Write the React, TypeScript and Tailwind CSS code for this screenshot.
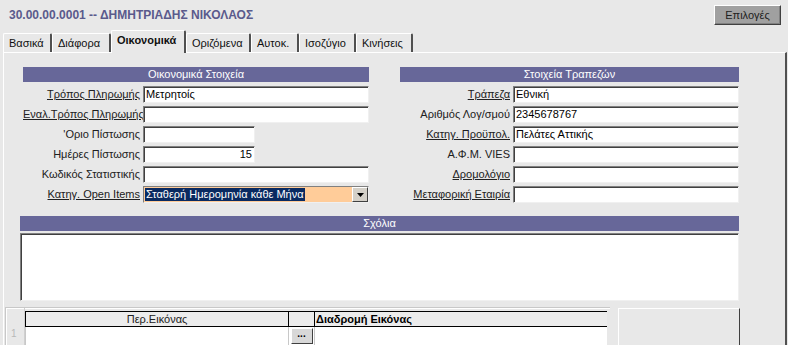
import React from "react";

const sunken =
  "bg-white border border-t-[#808080] border-l-[#808080] border-b-[#f0f0f0] border-r-[#f0f0f0] shadow-[inset_1px_1px_0_#404040]";

function Field({ w, value, right }: { w: string; value?: string; right?: boolean }) {
  return (
    <div
      className={`${w} h-[17px] ${sunken} text-[11px] leading-[15px] px-[2px] text-black whitespace-nowrap overflow-hidden ${
        right ? "text-right" : "text-left"
      }`}
    >
      {value}
    </div>
  );
}

function Row({
  label,
  u,
  labelW,
  children,
}: {
  label: string;
  u?: boolean;
  labelW: string;
  children: React.ReactNode;
}) {
  return (
    <div className="flex items-center h-[17px]">
      <div className={`${labelW} pr-[3px] text-right text-[11px] leading-[15px] text-[#202020] whitespace-nowrap`}>
        <span className={u ? "underline underline-offset-1" : ""}>{label}</span>
      </div>
      {children}
    </div>
  );
}

function Header({ title, w }: { title: string; w: string }) {
  return (
    <div className={`${w} h-[15px] bg-[#676799] text-white text-[11px] leading-[15px] text-center`}>{title}</div>
  );
}

const tabs = ["Βασικά", "Διάφορα", "Οικονομικά", "Οριζόμενα", "Αυτοκ.", "Ισοζύγιο", "Κινήσεις"];
const tabW = ["w-[49px]", "w-[59px]", "w-[75px]", "w-[65px]", "w-[48px]", "w-[57px]", "w-[57px]"];

export default function App() {
  return (
    <div className="w-[788px] h-[345px] overflow-hidden bg-[#e8e8e8] font-['Liberation_Sans',Arial,sans-serif] text-black">
      {/* Title bar */}
      <div className="flex justify-between h-[30px]">
        <div className="pl-[9px] pt-[7px] text-[12px] leading-[16px] font-bold text-[#5a5a8c]">
          30.00.00.0001 -- ΔΗΜΗΤΡΙΑΔΗΣ ΝΙΚΟΛΑΟΣ
        </div>
        <div className="mt-[5px] mr-[7px] w-[67px] h-[20px] bg-[#a0a0a0] border border-t-white border-l-white border-b-[#404040] border-r-[#404040] shadow-[inset_-1px_-1px_0_#808080] text-[11px] leading-[18px] text-center text-[#202020]">
          Επιλογές
        </div>
      </div>

      {/* Tabs */}
      <div className="flex items-end h-[22px] pl-[3px]">
        {tabs.map((t, i) => {
          const sel = i === 2;
          return (
            <div
              key={t}
              className={`${tabW[i]} ${
                sel
                  ? "h-[23px] -mb-[1px] relative z-10 font-bold pt-[2px]"
                  : "h-[19px] pt-[2px]"
              } bg-[#e8e8e8] border-t border-l border-t-white border-l-white border-r-2 border-r-[#505050] rounded-tl-[2px] rounded-tr-[2px] text-[11px] leading-[15px] pl-[5px] whitespace-nowrap text-[#101010]`}
            >
              {t}
            </div>
          );
        })}
      </div>

      {/* Panel */}
      <div className="ml-[3px] w-[784px] h-[293px] border-t border-l border-t-white border-l-white border-r-2 border-r-[#505050]">
        <div className="flex pt-[14px] pl-[19px]">
          {/* Left section */}
          <div className="w-[346px]">
            <Header title="Οικονομικά Στοιχεία" w="w-[346px]" />
            <div className="mt-[4px] flex flex-col gap-[3px]">
              <Row label="Τρόπος Πληρωμής" u labelW="w-[120px]">
                <Field w="w-[226px]" value="Μετρητοίς" />
              </Row>
              <Row label="Εναλ.Τρόπος Πληρωμής" u labelW="w-[120px]">
                <Field w="w-[226px]" />
              </Row>
              <Row label="'Οριο Πίστωσης" labelW="w-[120px]">
                <Field w="w-[112px]" />
              </Row>
              <Row label="Ημέρες Πίστωσης" labelW="w-[120px]">
                <Field w="w-[112px]" value="15" right />
              </Row>
              <Row label="Κωδικός Στατιστικής" labelW="w-[120px]">
                <Field w="w-[226px]" />
              </Row>
              <Row label="Κατηγ. Open Items" u labelW="w-[120px]">
                <div className={`w-[226px] h-[17px] ${sunken} flex items-stretch`}>
                  <div className="flex-1 flex items-start bg-[#ffcc99] pl-[1px] pt-[1px] overflow-hidden">
                    <div className="h-[13px] bg-[#0a2a60] text-white text-[11px] leading-[13px] px-[1px] whitespace-nowrap">
                      Σταθερή Ημερομηνία κάθε Μήνα
                    </div>
                  </div>
                  <div className="w-[16px] bg-[#d4d0c8] border border-t-white border-l-white border-b-[#404040] border-r-[#404040] flex items-center justify-center">
                    <svg width="7" height="4" viewBox="0 0 7 4">
                      <path d="M0 0h7L3.5 4z" fill="#000" />
                    </svg>
                  </div>
                </div>
              </Row>
            </div>
          </div>

          {/* Right section */}
          <div className="w-[339px] ml-[31px]">
            <Header title="Στοιχεία Τραπεζών" w="w-[339px]" />
            <div className="mt-[4px] flex flex-col gap-[3px]">
              <Row label="Τράπεζα" u labelW="w-[113px]">
                <Field w="w-[226px]" value="Εθνική" />
              </Row>
              <Row label="Αριθμός Λογ/σμού" labelW="w-[113px]">
                <Field w="w-[226px]" value="2345678767" />
              </Row>
              <Row label="Κατηγ. Προϋπολ." u labelW="w-[113px]">
                <Field w="w-[226px]" value="Πελάτες Αττικής" />
              </Row>
              <Row label="Α.Φ.Μ. VIES" labelW="w-[113px]">
                <Field w="w-[226px]" />
              </Row>
              <Row label="Δρομολόγιο" u labelW="w-[113px]">
                <Field w="w-[226px]" />
              </Row>
              <Row label="Μεταφορική Εταιρία" u labelW="w-[113px]">
                <Field w="w-[226px]" />
              </Row>
            </div>
          </div>
        </div>

        {/* Comments */}
        <div className="mt-[13px] ml-[16px] w-[719px]">
          <Header title="Σχόλια" w="w-[719px]" />
          <div className={`mt-[2px] h-[68px] ${sunken}`} />
        </div>

        {/* Bottom grid */}
        <div className="mt-[6px] ml-[1px] flex">
          <div className="w-[605px] h-[40px] border-t border-l border-t-[#c8c8c8] border-l-[#c8c8c8] shadow-[inset_1px_1px_0_white] flex">
            <div className="w-[19px] pt-[19px] text-[10px] leading-[14px] text-[#b8b8b8] pl-[5px] border-r border-r-[#d0d0d0]">
              1
            </div>
            <div className="w-[582px] pt-[3px]">
              <div className="flex h-[16px] border-t border-b border-black bg-[#ececec] border-l border-l-black">
                <div className="w-[263px] text-center text-[11px] leading-[14px] text-[#202020] border-r border-black">
                  Περ.Εικόνας
                </div>
                <div className="w-[26px] border-r border-black" />
                <div className="flex-1 pl-[1px] text-[11px] leading-[14px] font-bold text-black">Διαδρομή Εικόνας</div>
              </div>
              <div className="flex h-[19px] bg-white border-l border-l-[#c8c8c8]">
                <div className="w-[263px] border-r border-r-[#c8c8c8]" />
                <div className="w-[26px] bg-white border-r border-r-[#c8c8c8] flex items-start justify-center pt-[1px]">
                  <div className="w-[22px] h-[16px] bg-[#d8d8d8] border border-t-white border-l-white border-b-[#404040] border-r-[#404040] text-[10px] leading-[10px] font-bold text-center">
                    ...
                  </div>
                </div>
                <div className="flex-1" />
              </div>
            </div>
          </div>
          <div className="ml-[8px] mt-[1px] w-[122px] h-[40px] border border-t-white border-l-white border-r-[#404040] border-b-[#404040] bg-[#e8e8e8]" />
        </div>
      </div>
    </div>
  );
}
